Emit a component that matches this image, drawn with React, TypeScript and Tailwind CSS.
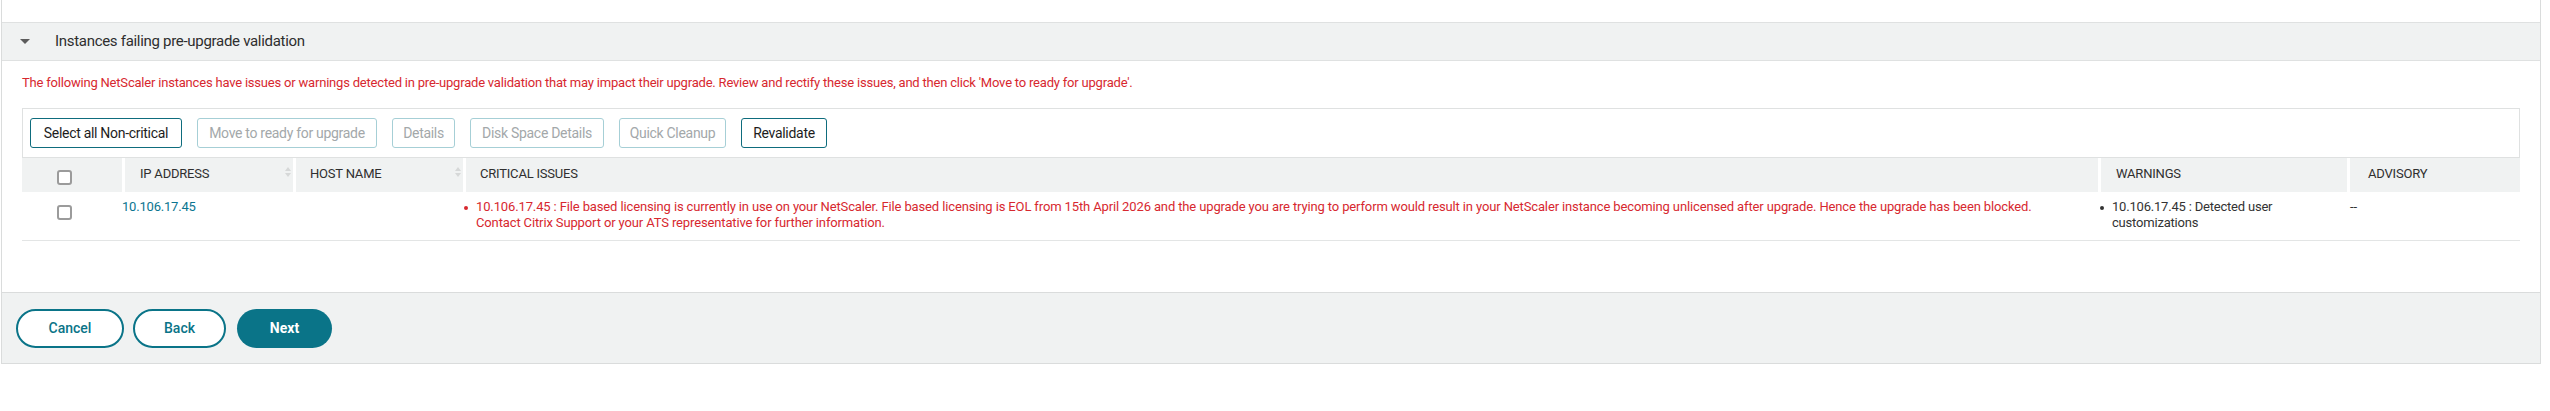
import React from "react";

function Checkbox() {
  return <div className="size-[15px] rounded-[3px] border-2 border-[#9b9b9b] bg-white" />;
}

function SortIcon() {
  return (
    <svg width="6" height="10" viewBox="0 0 6 10" className="shrink-0">
      <path d="M3 0 L6 4 L0 4 Z" fill="#d6d8d8" />
      <path d="M3 10 L6 6 L0 6 Z" fill="#d6d8d8" />
    </svg>
  );
}

function ToolButton({ label, width, disabled }: { label: string; width: string; disabled?: boolean }) {
  return (
    <button
      className={`${width} h-[30px] rounded-[3px] border text-[14px] tracking-[-0.3px] ${
        disabled ? "border-[#a6cfd6] text-[#a3a8aa]" : "border-[#0e6c7d] text-[#1d1d1d]"
      }`}
    >
      {label}
    </button>
  );
}

const cols = "grid grid-cols-[100px_168px_167px_1632px_246px_170px] gap-x-[3px]";

export default function App() {
  return (
    <div className="w-[2550px] h-[411px] bg-white font-['Roboto',sans-serif] text-[#333]">
      <div className="ml-px w-[2540px] border-x border-b border-[#dadcdc] pt-[22px]">
        <div className="h-[39px] border-y border-[#dfe1e1] bg-[#f0f2f2] flex items-center pl-[18px]">
          <svg width="10" height="5" viewBox="0 0 10 5">
            <path d="M0 0 L10 0 L5 5 Z" fill="#5c5c5c" />
          </svg>
          <span className="ml-[25px] text-[15px] tracking-[-0.3px] text-[#2e2e2e]">
            Instances failing pre-upgrade validation
          </span>
        </div>

        <div className="px-[20px] pt-[14px]">
          <p className="text-[13px] leading-[16px] tracking-[-0.2px] text-[#d7282f]">
            The following NetScaler instances have issues or warnings detected in pre-upgrade validation that may
            impact their upgrade. Review and rectify these issues, and then click 'Move to ready for upgrade'.
          </p>

          <div className="mt-[17px] h-[50px] border border-[#dfe1e1] flex items-center gap-[15px] pl-[7px]">
            <ToolButton label="Select all Non-critical" width="w-[152px]" />
            <ToolButton label="Move to ready for upgrade" width="w-[180px]" disabled />
            <ToolButton label="Details" width="w-[63px]" disabled />
            <ToolButton label="Disk Space Details" width="w-[134px]" disabled />
            <ToolButton label="Quick Cleanup" width="w-[107px]" disabled />
            <ToolButton label="Revalidate" width="w-[86px]" />
          </div>

          <div className={`${cols} h-[34px] text-[13px] tracking-[-0.2px] text-[#2f2f2f]`}>
            <div className="bg-[#f0f2f2] pl-[35px] pt-[12px]">
              <Checkbox />
            </div>
            <div className="bg-[#f0f2f2] pl-[15px] pr-[2px] pt-[6px] flex justify-between">
              <span>IP ADDRESS</span>
              <span className="pt-[3px]">
                <SortIcon />
              </span>
            </div>
            <div className="bg-[#f0f2f2] pl-[14px] pr-[2px] pt-[6px] flex justify-between">
              <span>HOST NAME</span>
              <span className="pt-[3px]">
                <SortIcon />
              </span>
            </div>
            <div className="bg-[#f0f2f2] pl-[14px] pt-[6px]">CRITICAL ISSUES</div>
            <div className="bg-[#f0f2f2] pl-[15px] pt-[6px]">WARNINGS</div>
            <div className="bg-[#f0f2f2] pl-[18px] pt-[6px]">ADVISORY</div>
          </div>

          <div className={`${cols} h-[49px] border-b border-[#e3e5e5] text-[13px] leading-[16px] tracking-[-0.2px]`}>
            <div className="pl-[35px] pt-[13px]">
              <Checkbox />
            </div>
            <div className="-ml-[3px] pt-[7px] text-[#0b7590]">10.106.17.45</div>
            <div />
            <div className="-ml-[2px] pt-[7px] flex text-[#d7282f] tracking-[-0.13px]">
              <span className="mt-[7px] size-[4px] shrink-0 rounded-full bg-[#d7282f]" />
              <span className="ml-[8px]">
                10.106.17.45 : File based licensing is currently in use on your NetScaler. File based licensing is EOL
                from 15th April 2026 and the upgrade you are trying to perform would result in your NetScaler instance
                becoming unlicensed after upgrade. Hence the upgrade has been blocked.
                <br />
                Contact Citrix Support or your ATS representative for further information.
              </span>
            </div>
            <div className="-ml-px pt-[7px] flex text-[#333]">
              <span className="mt-[7px] size-[4px] shrink-0 rounded-full bg-[#333]" />
              <span className="ml-[8px] pr-[70px]">10.106.17.45 : Detected user customizations</span>
            </div>
            <div className="pt-[7px] text-[#333]">--</div>
          </div>
        </div>

        <div className="mt-[51px] h-[71px] border-t border-[#dadcdc] bg-[#f0f2f2] flex items-center gap-[9px] pl-[14px]">
          <button className="w-[108px] h-[39px] rounded-full border-2 border-[#0a7488] bg-white text-[14px] font-medium text-[#0a7488]">
            Cancel
          </button>
          <button className="w-[93px] h-[39px] rounded-full border-2 border-[#0a7488] bg-white text-[14px] font-medium text-[#0a7488]">
            Back
          </button>
          <button className="ml-[2px] w-[95px] h-[39px] rounded-full bg-[#0a7488] text-[14px] font-bold text-white">
            Next
          </button>
        </div>
      </div>
    </div>
  );
}
